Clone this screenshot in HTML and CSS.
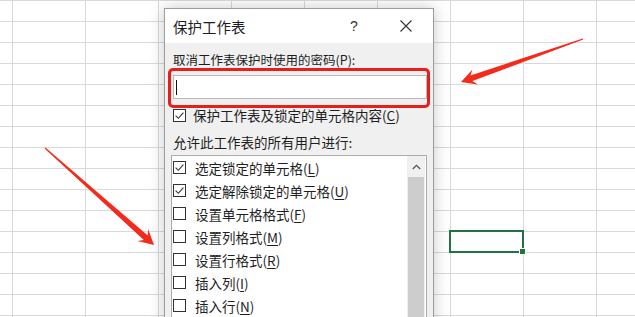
FILE: index.html
```html
<!DOCTYPE html>
<html lang="zh-CN">
<head>
    <meta charset="UTF-8">
    <meta name="viewport" content="width=device-width, initial-scale=1.0">
    <title>保护工作表</title>
    <link rel="stylesheet" href="styles.css">
</head>
<body>
    <div class="sheet">
        <!-- active cell on the grid -->
        <div class="active-cell"><span class="fill-handle"></span></div>

        <div class="dialog">
            <div class="dialog-title">
                <span class="title-text">保护工作表</span>
                <span class="title-help">?</span>
                <span class="title-close">
                    <svg width="12" height="12" viewBox="0 0 12 12"><path d="M0.5 0.5 L11.5 11.5 M11.5 0.5 L0.5 11.5" stroke="#333" stroke-width="1.1" fill="none"/></svg>
                </span>
            </div>

            <div class="dialog-body">
                <div class="field-label first">取消工作表保护时使用的密码(P):</div>
                <div class="password-input"><span class="caret"></span></div>

                <div class="check-row">
                    <span class="checkbox checked"></span>
                    <span>保护工作表及锁定的单元格内容(<u>C</u>)</span>
                </div>

                <div class="field-label">允许此工作表的所有用户进行:</div>

                <div class="perm-list">
                    <ul class="perm-items">
                        <li><span class="checkbox checked"></span><span>选定锁定的单元格(<u>L</u>)</span></li>
                        <li><span class="checkbox checked"></span><span>选定解除锁定的单元格(<u>U</u>)</span></li>
                        <li><span class="checkbox"></span><span>设置单元格格式(<u>F</u>)</span></li>
                        <li><span class="checkbox"></span><span>设置列格式(<u>M</u>)</span></li>
                        <li><span class="checkbox"></span><span>设置行格式(<u>R</u>)</span></li>
                        <li><span class="checkbox"></span><span>插入列(<u>I</u>)</span></li>
                        <li><span class="checkbox"></span><span>插入行(<u>N</u>)</span></li>
                    </ul>
                    <div class="scrollbar">
                        <div class="scroll-up">
                            <svg width="9" height="6" viewBox="0 0 9 6"><path d="M0.8 5 L4.5 1.3 L8.2 5" stroke="#555" stroke-width="1.3" fill="none"/></svg>
                        </div>
                        <div class="scroll-thumb"></div>
                    </div>
                </div>
            </div>

            <!-- red annotation round the password box -->
            <div class="highlight-box"></div>
        </div>

        <svg class="arrows" width="635" height="317" viewBox="0 0 635 317">
            <polygon points="154,245 137.5,241 143.8,239.9 44.6,148.4 45.4,147.6 147.8,235.5 148.1,229" fill="#f42a1c"/>
            <polygon points="461,82 477.8,84.5 472.4,81.1 583.2,39.6 582.8,38.4 470.4,75.5 472.5,69.5" fill="#f42a1c"/>
        </svg>
    </div>
</body>
</html>
```

FILE: styles.css
```css
html, body {
    margin: 0;
    padding: 0;
}
body {
    width: 635px;
    height: 317px;
    overflow: hidden;
    font-family: "Noto Sans CJK SC", "Noto Sans", sans-serif;
    color: #1e1e1e;
}
.sheet {
    position: relative;
    width: 635px;
    height: 317px;
    background-color: #fff;
    /* spreadsheet gridlines */
    background-image:
        repeating-linear-gradient(to right, #d9d9d9 0 1px, transparent 1px 73px),
        repeating-linear-gradient(to bottom, #d9d9d9 0 1px, transparent 1px 21px);
    background-position: 12px 0, 0 0;
}
.active-cell {
    position: absolute;
    left: 449px;
    top: 230px;
    width: 75px;
    height: 23px;
    box-sizing: border-box;
    border: 2px solid #217346;
}
.fill-handle {
    position: absolute;
    right: -4px;
    bottom: -4px;
    width: 5px;
    height: 5px;
    background-color: #217346;
    border: 1px solid #fff;
}

/* dialog window */
.dialog {
    position: absolute;
    left: 164px;
    top: 8px;
    width: 270px;
    height: 330px;
    box-sizing: border-box;
    border: 1px solid #9c9c9c;
    background-color: #f0f0f0;
    box-shadow: 0 0 14px rgba(0, 0, 0, 0.22);
}
.dialog-title {
    height: 34px;
    background-color: #fff;
    display: flex;
    align-items: center;
    padding-left: 8px;
}
.title-text {
    font-size: 14.5px;
    flex: 1;
}
.title-help {
    font-size: 14px;
    width: 14px;
    text-align: center;
    margin-right: 39px;
    font-family: "Liberation Sans", sans-serif;
    color: #333;
}
.title-close {
    display: flex;
    margin-right: 21px;
}
.dialog-body {
    padding: 0 6px 0 8px;
}
.field-label {
    font-size: 13.5px;
    line-height: 18px;
    margin-top: 8px;
}
.field-label.first {
    font-size: 12.5px;
}
.password-input {
    height: 24px;
    margin-top: 6px;
    box-sizing: border-box;
    border: 1px solid #b9b9b9;
    background-color: #fff;
    display: flex;
    align-items: center;
    padding-left: 2px;
}
.caret {
    width: 1px;
    height: 15px;
    background-color: #111;
}
.check-row {
    display: flex;
    align-items: center;
    gap: 7px;
    height: 20px;
    margin-top: 6px;
    font-size: 13.5px;
}
.checkbox {
    flex: none;
    width: 13px;
    height: 13px;
    box-sizing: border-box;
    border: 1px solid #333;
    background-color: #fff;
}
.checkbox.checked {
    background-image: url("data:image/svg+xml;utf8,<svg xmlns='http://www.w3.org/2000/svg' width='11' height='11' viewBox='0 0 11 11'><path d='M1.6 5.6 L4.3 8.3 L9.4 2.6' stroke='%23333' stroke-width='1.1' fill='none'/></svg>");
    background-repeat: no-repeat;
}
u {
    text-underline-offset: 2px;
}

/* permissions list */
.perm-list {
    display: flex;
    margin-top: 4px;
    margin-left: -2px;
    height: 200px;
    border: 1px solid #acacac;
    background-color: #fff;
}
.perm-items {
    flex: 1;
    list-style: none;
    margin: 0;
    padding: 0 0 0 1px;
}
.perm-items li {
    display: flex;
    align-items: center;
    gap: 9px;
    height: 23px;
    font-size: 13.5px;
}
.scrollbar {
    width: 18px;
    margin-right: 1px;
    display: flex;
    flex-direction: column;
    background-color: #f0f0f0;
}
.scroll-up {
    height: 21px;
    display: flex;
    align-items: center;
    justify-content: center;
}
.scroll-thumb {
    flex: 1;
    margin: 0 1px;
    background-color: #cdcdcd;
}

.highlight-box {
    position: absolute;
    left: 3px;
    top: 59px;
    width: 262px;
    height: 40px;
    box-sizing: border-box;
    border: 3px solid #ea1d1d;
    border-radius: 5px;
}
.arrows {
    position: absolute;
    left: 0;
    top: 0;
}
```
